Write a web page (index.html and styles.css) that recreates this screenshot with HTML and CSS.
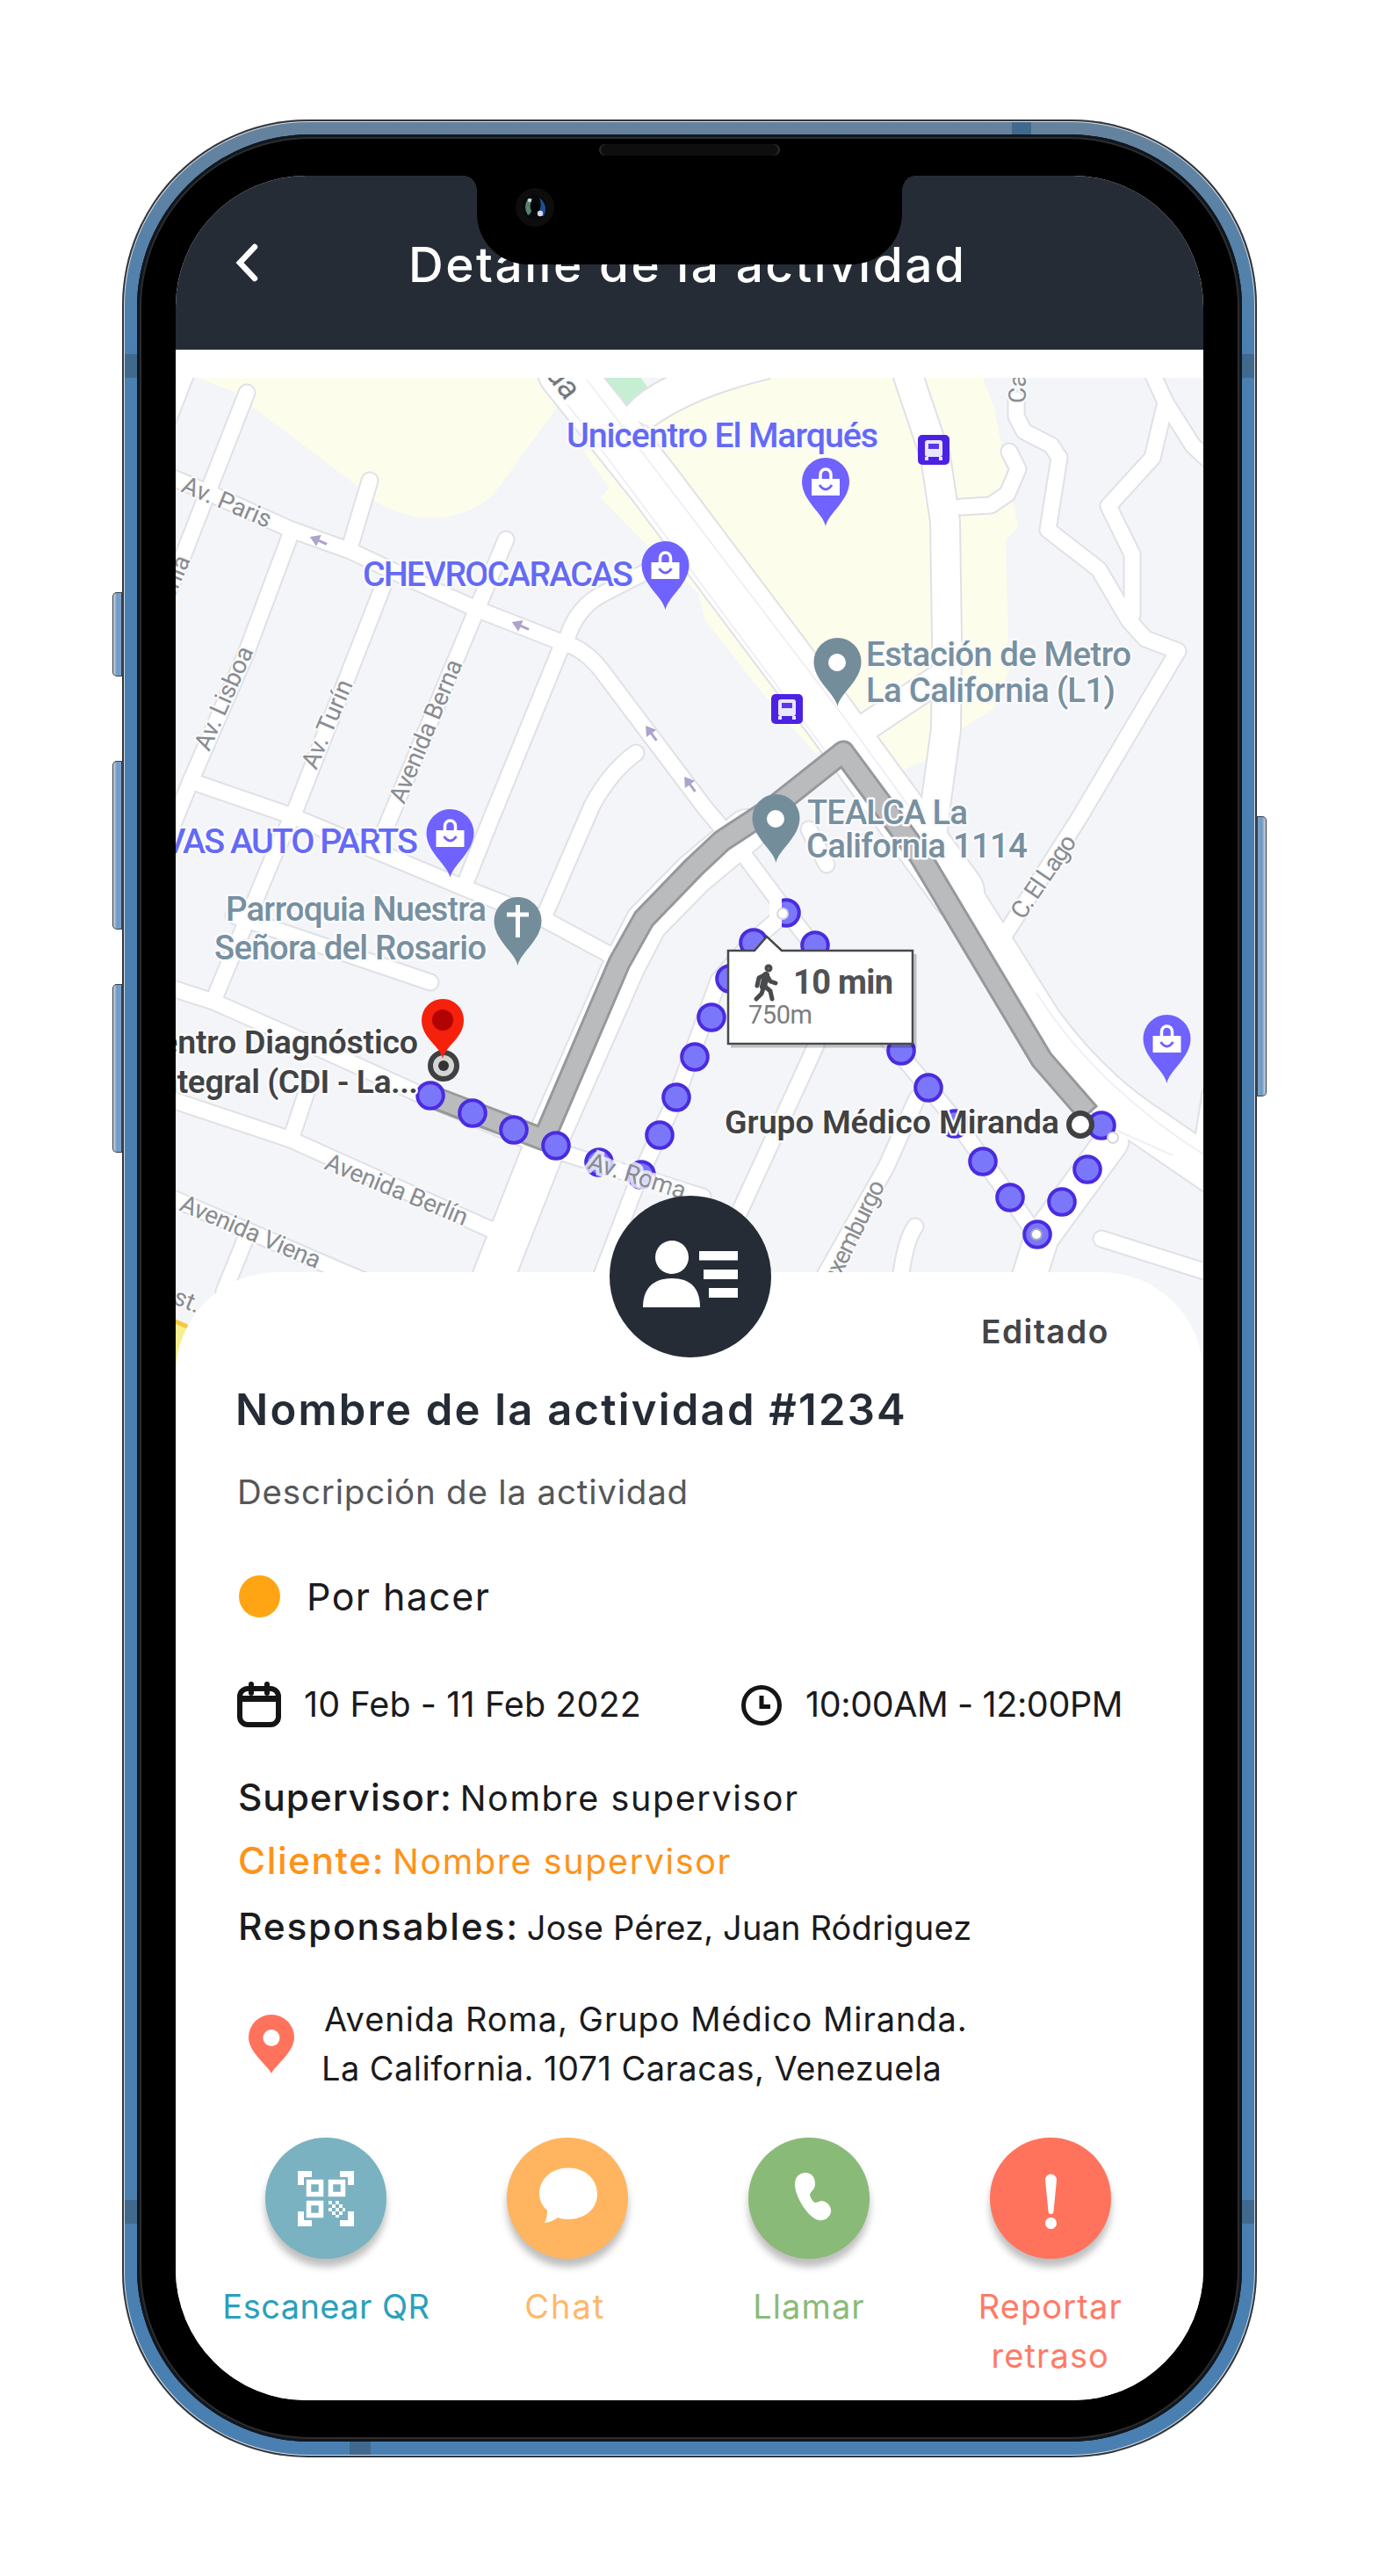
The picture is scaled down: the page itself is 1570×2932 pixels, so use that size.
FILE: index.html
```html
<!DOCTYPE html>
<html lang="es">
<head>
<meta charset="utf-8">
<title>Detalle de la actividad</title>
<link rel="stylesheet" href="styles.css">
</head>
<body>
<main class="phone">
  <span class="side-btn mute"></span>
  <span class="side-btn vol-up"></span>
  <span class="side-btn vol-down"></span>
  <span class="side-btn power"></span>
  <span class="band band-top"></span>
  <span class="band band-bottom"></span>
  <span class="band band-side band-tl"></span>
  <span class="band band-side band-tr"></span>
  <span class="band band-side band-bl"></span>
  <span class="band band-side band-br"></span>
  <div class="bezel">
    <span class="speaker"></span>
    <div class="screen">
      <div class="notch">
        <svg class="camera" viewBox="0 0 44 44">
          <circle cx="22" cy="22" r="22" fill="#0d0d0e"/>
          <circle cx="22" cy="22" r="14" fill="#08090c"/>
          <path d="M14 12Q8 22 14 31Q17 30 18 26Q15 20 19 12Z" fill="#56806f"/>
          <path d="M27 11Q38 20 32 32Q27 32 26 28Q31 20 27 11Z" fill="#1c4f94"/>
          <circle cx="22" cy="22" r="5" fill="#030405"/>
          <circle cx="16" cy="14" r="2.2" fill="#c6d8cf"/>
          <circle cx="28" cy="29" r="3.2" fill="#d9d3e6"/>
        </svg>
      </div>
      <header class="topbar">
        <svg class="back" viewBox="0 0 30 46"><path d="M25 5L8 23L25 41"/></svg>
        <h1 class="topbar-title">Detalle de la actividad</h1>
      </header>

      <svg class="map" viewBox="200 430 1170 1150">
        <defs>
          <g id="shop">
            <path d="M0 51C-3 36-27 22-27 0A27 27 0 0 1 27 0C27 22 3 36 0 51Z" fill="#6f62ff"/>
            <path d="M-16 -3H16V16H-16Z" fill="#fff"/>
            <path d="M-6 -3V-8A6 6 0 0 1 6 -8V-3" fill="none" stroke="#fff" stroke-width="3.5"/>
            <path d="M-7 4Q0 14 7 4" fill="none" stroke="#6f62ff" stroke-width="3"/>
          </g>
          <path id="poi" d="M0 51C-3 36-27 22-27 0A27 27 0 0 1 27 0C27 22 3 36 0 51Z" fill="#748d9b"/>
          <g id="bus">
            <rect x="-18" y="-17" width="36" height="34" rx="5" fill="#4b22e2"/>
            <rect x="-10" y="-11" width="20" height="19" rx="3" fill="#e9e6ff"/>
            <rect x="-6" y="-7" width="12" height="6" fill="#5a3ae6"/>
            <path d="M-8 8V12M8 8V12" stroke="#e9e6ff" stroke-width="4"/>
          </g>
          <path id="oneway" d="M-10 0L1 -7V-1.5H11V1.5H1V7Z" fill="#aea3cc"/>
          <g id="minor">
            <path d="M216 415L186 492"/>
            <path d="M281 447L232 572L186 690"/>
            <path d="M190 541L240 562L332 603L399 627L458 655L542 693L642 732Q665 738 684 762L803 920L841 965L891 1032L1009 1181L1086 1273L1180 1406"/>
            <path d="M421 547L398 624"/>
            <path d="M332 605L280 744L217 889L185 968"/>
            <path d="M437 665L335 925L312 973L245 1134"/>
            <path d="M576 614L546 686L431 962"/>
            <path d="M640 734L557 937L528 1010"/>
            <path d="M741 648L690 674Q655 690 644 732"/>
            <path d="M724 857Q695 878 674 917L620 1042"/>
            <path d="M217 889L333 929L527 1010L619 1046L695 1087"/>
            <path d="M266 1042L490 1118"/>
            <path d="M190 1123L243 1140L354 1189L488 1250L615 1304L726 1339L800 1362"/>
            <path d="M190 1250L331 1297L560 1400"/>
            <path d="M350 1240L331 1297"/>
            <path d="M190 1361L389 1447L420 1460"/>
            <path d="M282 1404L255 1470"/>
            <path d="M898 1036L858 1070L818 1116L770 1249L726 1344L680 1464"/>
            <path d="M921 944L941 984"/>
            <path d="M929 1190L837 1390"/>
            <path d="M1044 1250L1009 1328L932 1464"/>
            <path d="M1042 1396Q1030 1412 1024 1464"/>
            <path d="M1254 1410L1390 1453"/>
            <path d="M1378 1245L1366 1320"/>
            <path d="M1094 577L1128 575L1147 562L1159 534L1149 514"/>
            <path d="M1157 455V474L1166 491L1197 507L1206 521L1193 603L1251 648L1285 706L1304 727L1341 741L1228 932L1142 1067L1120 1090"/>
            <path d="M1312 425L1327 458L1312 521L1262 576L1289 631V700"/>
            <path d="M1327 458L1358 507L1385 532"/>
          </g>
          <path id="boulevard" d="M561 1455L622 1300L712 1096L736 1050L790 995L850 945"/>
          <path id="northsouth" d="M1033 425L1065 520L1076 593L1078 727L1077 830L1066 910L1062 945"/>
          <path id="highway" d="M643 423L745 551L945 817L1090 1015"/>
          <path id="highway-south" d="M1050 950L1185 1165Q1240 1240 1310 1285L1390 1340"/>
          <path id="ramp" d="M979 832L1075 768"/>
          <path id="plaza" d="M1168 1465L1186 1408L1265 1300"/>
          <circle id="dot" r="14.8" fill="#7b77fb" stroke="#4a2cdf" stroke-width="4"/>
        </defs>
        <rect x="200" y="430" width="1170" height="1150" fill="#f4f5f8"/>
        <g fill="#fdfdeb">
          <path d="M226 430H615L634 464L573 548Q545 590 488 589Q440 588 404 551L286 462L266 446Z"/>
          <path d="M741 486L780 455L872 430H1119L1132 465L1159 600L1145 614L1149 761L1132 806L1094 830L1055 865L1025 878L960 850Z"/>
          <path d="M664 513L693 555L684 567L733 617L795 675L803 706L868 789L929 858L960 840L700 500Z"/>
        </g>
        <path d="M676 420H722L739 443L712 470Z" fill="#c5eed3"/>
        <path d="M190 1500L216 1511L240 1590H190Z" fill="#f7ef8f"/>
        <path d="M190 1500L218 1512" stroke="#f5c842" stroke-width="5"/>

        <g fill="none" stroke="#e0e1e6" stroke-linecap="round" stroke-linejoin="round">
          <use href="#minor" stroke-width="21"/>
          <use href="#boulevard" stroke-width="50"/>
          <use href="#northsouth" stroke-width="36"/>
          <use href="#highway" stroke-width="64"/>
          <use href="#highway-south" stroke-width="52"/>
          <use href="#ramp" stroke-width="34"/>
          <use href="#plaza" stroke-width="42"/>
          <path d="M712 465Q730 444 765 428L875 430Q790 450 741 486Z" stroke-width="5"/>
        </g>
        <g fill="none" stroke="#fff" stroke-linecap="round" stroke-linejoin="round">
          <use href="#minor" stroke-width="17"/>
          <use href="#boulevard" stroke-width="46"/>
          <use href="#northsouth" stroke-width="32"/>
          <use href="#highway" stroke-width="60"/>
          <use href="#highway-south" stroke-width="48"/>
          <use href="#ramp" stroke-width="30"/>
          <use href="#plaza" stroke-width="38"/>
          <path d="M712 465Q730 444 765 428L875 430Q790 450 741 486L725 478Z" fill="#fff" stroke-width="1"/>
        </g>
        <g fill="none" stroke="#eef0f6" stroke-width="2">
          <path d="M646 460L940 855M668 432L960 815L1040 925"/>
          <path d="M1180 1130Q1250 1240 1380 1320M1230 1268L1335 1315"/>
        </g>
        <g>
          <use href="#oneway" transform="translate(362 615) rotate(23)"/>
          <use href="#oneway" transform="translate(592 712) rotate(23)"/>
          <use href="#oneway" transform="translate(741 834) rotate(54)"/>
          <use href="#oneway" transform="translate(785 892) rotate(54)"/>
        </g>

        <g fill="none" stroke-linejoin="round">
          <path stroke="#97989b" stroke-width="27" d="M488 1247L619 1297L705 1096L733 1046L790 987L822 957L883 917L960 856L1048 975L1186 1206L1240 1268"/>
          <path stroke="#babbbd" stroke-width="21" d="M489 1247L619 1297L705 1096L733 1046L790 987L822 957L883 917L960 856L1048 975L1186 1206L1238 1266"/>
        </g>

        <g>
          <use href="#dot" x="490" y="1247"/><use href="#dot" x="538" y="1267"/>
          <use href="#dot" x="585" y="1286"/><use href="#dot" x="633" y="1304"/>
          <use href="#dot" x="682" y="1323"/><use href="#dot" x="730" y="1337"/>
          <use href="#dot" x="751" y="1292"/><use href="#dot" x="770" y="1249"/>
          <use href="#dot" x="791" y="1203"/><use href="#dot" x="810" y="1158"/>
          <use href="#dot" x="831" y="1114"/><use href="#dot" x="858" y="1073"/>
          <use href="#dot" x="895" y="1039"/><use href="#dot" x="928" y="1076"/>
          <use href="#dot" x="1026" y="1196"/><use href="#dot" x="1057" y="1238"/>
          <use href="#dot" x="1087" y="1279"/><use href="#dot" x="1119" y="1322"/>
          <use href="#dot" x="1150" y="1363"/><use href="#dot" x="1181" y="1405"/>
          <use href="#dot" x="1209" y="1368"/><use href="#dot" x="1238" y="1331"/>
          <use href="#dot" x="1254" y="1281"/>
        </g>
        <rect x="876" y="1022" width="14" height="33" fill="#fff"/>
        <g fill="#fff" stroke="#d8d8dc" stroke-width="2">
          <circle cx="891" cy="1040" r="6"/>
          <circle cx="1180" cy="1405" r="6" stroke="#aab"/>
          <circle cx="1267" cy="1295" r="6"/>
        </g>
        <circle cx="1230" cy="1280" r="13" fill="#fff" stroke="#3f4042" stroke-width="6"/>

        <g class="street">
          <text x="205" y="559" transform="rotate(23 205 559)" textLength="108">Av. Paris</text>
          <text x="238" y="856" transform="rotate(-66.2 238 856)" textLength="126">Av. Lisboa</text>
          <text x="360" y="877" transform="rotate(-66.8 360 877)" textLength="107">Av. Turín</text>
          <text x="460" y="916" transform="rotate(-67.4 460 916)" textLength="174">Avenida Berna</text>
          <text x="217" y="637" transform="rotate(-67 217 637)" text-anchor="end">enia</text>
          <text x="368" y="1330" transform="rotate(22.2 368 1330)" textLength="173">Avenida Berlín</text>
          <text x="203" y="1377" transform="rotate(23.2 203 1377)" textLength="171">Avenida Viena</text>
          <text x="224" y="1495" transform="rotate(23 224 1495)" text-anchor="end">est.</text>
          <text class="over-dots" x="668" y="1330" transform="rotate(17.8 668 1330)" textLength="115">Av. Roma</text>
          <text x="1165" y="1048" transform="rotate(-55.7 1165 1048)" textLength="109">C. El Lago</text>
          <text x="1008" y="1349" transform="rotate(-64 1008 1349)" text-anchor="end" textLength="141">Luxemburgo</text>
          <text x="1168" y="459" transform="rotate(-90 1168 459)">Calle</text>
          <text class="avenue" x="644" y="457" transform="rotate(53 644 457)" text-anchor="end">Agua</text>
        </g>

        <g class="place shop">
          <text x="645" y="509" textLength="355">Unicentro El Marqués</text>
          <text x="413" y="667" textLength="308">CHEVROCARACAS</text>
          <text x="476" y="971" text-anchor="end" textLength="290">VAS AUTO PARTS</text>
        </g>
        <g class="place civic">
          <text x="986" y="758" textLength="302">Estación de Metro</text>
          <text x="986" y="799" textLength="284">La California (L1)</text>
          <text x="919" y="938" textLength="183">TEALCA La</text>
          <text x="918" y="976" textLength="252">California 1114</text>
          <text x="257" y="1048" textLength="297">Parroquia Nuestra</text>
          <text x="244" y="1092" textLength="310">Señora del Rosario</text>
        </g>
        <g class="place stop">
          <text x="476" y="1199" text-anchor="end" textLength="318">Centro Diagnóstico</text>
          <text x="476" y="1244" text-anchor="end" textLength="305">Integral (CDI - La...</text>
          <text x="825" y="1290" textLength="381">Grupo Médico Miranda</text>
        </g>

        <use href="#shop" x="940" y="548"/>
        <use href="#shop" x="757.5" y="643"/>
        <use href="#shop" x="512.5" y="948"/>
        <use href="#shop" x="1328.5" y="1182"/>
        <use href="#poi" x="953.5" y="753"/><circle cx="953" cy="754" r="10" fill="#fff"/>
        <use href="#poi" x="883.5" y="931"/><circle cx="883" cy="932" r="10" fill="#fff"/>
        <use href="#poi" x="589.5" y="1048"/>
        <path d="M589.500 1030V1067M577 1041H602" stroke="#fff" stroke-width="5"/>
        <use href="#bus" x="1063" y="512"/>
        <use href="#bus" x="896" y="807"/>

        <circle cx="505" cy="1213" r="15" fill="#d5d5d5" stroke="#3f4042" stroke-width="6"/>
        <circle cx="505" cy="1213" r="6" fill="#333"/>
        <path d="M504 1205C501 1190 480 1182 480 1161A24 24 0 0 1 528 1161C528 1182 507 1190 504 1205Z" fill="#f5210b"/>
        <circle cx="504" cy="1161" r="12" fill="#b20303"/>

        <path d="M829 1082H859L873 1066L890 1082H1039V1188H829Z" fill="#fff" stroke="#47494b" stroke-width="2.500"/>
        <path d="M832 1191H1042V1086" fill="none" stroke="#000" stroke-opacity=".22" stroke-width="3"/>
        <g fill="none" stroke="#484a4c" stroke-width="5" stroke-linecap="round" stroke-linejoin="round">
          <circle cx="875" cy="1102" r="2"/>
          <path d="M862 1122L864 1113L872 1109L870 1122L877 1128L879 1137M870 1122L867 1131L861 1137M873 1110L877 1117L883 1119"/>
          <path d="M872 1110L869 1123" stroke-width="8"/>
        </g>
        <text class="walk-time" x="903" y="1131" textLength="114">10 min</text>
        <text class="walk-dist" x="852" y="1165" textLength="73">750m</text>
      </svg>

      <section class="sheet">
        <div class="avatar">
          <svg viewBox="0 0 184 184">
            <g fill="#fff">
              <circle cx="71" cy="70" r="19"/>
              <path d="M38 127C38 105 50 94 71 94S103 105 103 127Z"/>
              <path d="M102 63H146V73.500H102ZM107 84H146V95H107ZM113 105H146V116H113Z"/>
            </g>
          </svg>
        </div>
        <p class="edited">Editado</p>
        <h2 class="name">Nombre de la actividad #1234</h2>
        <p class="desc">Descripción de la actividad</p>
        <p class="status"><i class="status-dot"></i>Por hacer</p>
        <div class="when">
          <svg class="cal" viewBox="0 0 52 52">
            <rect x="4" y="8" width="44" height="41" rx="9"/>
            <path d="M4 19.500H48" stroke-width="7"/>
            <path d="M17 3V13M35 3V13" stroke-linecap="round"/>
          </svg>
          <span class="when-date">10 Feb - 11 Feb 2022</span>
          <svg class="clock" viewBox="0 0 46 46">
            <circle cx="23" cy="23" r="20.500"/>
            <path d="M23 12V24.500H33"/>
          </svg>
          <span class="when-time">10:00AM - 12:00PM</span>
        </div>
        <div class="people">
          <p class="supervisor"><b>Supervisor:</b><span>Nombre supervisor</span></p>
          <p class="client"><b>Cliente:</b><span>Nombre supervisor</span></p>
          <p class="team"><b>Responsables:</b><span>Jose Pérez, Juan Ródriguez</span></p>
        </div>
        <div class="address">
          <svg class="pin" viewBox="0 0 52 67"><path fill-rule="evenodd" d="M26 67C22 58 0 43 0 26A26 26 0 0 1 52 26C52 43 30 58 26 67ZM26 17A9.500 9.500 0 1 0 26 36A9.500 9.500 0 1 0 26 17Z"/></svg>
          <div>
            <p class="street-line">Avenida Roma, Grupo Médico Miranda.</p>
            <p class="city-line">La California. 1071 Caracas, Venezuela</p>
          </div>
        </div>
        <nav class="actions">
          <a class="action qr">
            <span class="disc"><svg viewBox="0 0 138 138">
              <g fill="none" stroke="#fff" stroke-width="7">
                <path d="M40.500 54V41.500H53M85 41.500H97.500V54M97.500 84V97.500H85M53 97.500H40.500V84"/>
                <path stroke-width="5.500" d="M49.500 50.500H63.500V64.500H49.500ZM74.500 50.500H88.500V64.500H74.500ZM49.500 74.500H63.500V88.500H49.500Z"/>
              </g>
              <path fill="#fff" d="M72 72H76V76H72ZM80 72H84V76H80ZM76 76H80V80H76ZM84 76H88V80H84ZM72 80H76V84H72ZM80 80H84V84H80ZM76 84H80V88H76ZM84 84H88V88H84ZM80 88H84V91H80ZM88 80H91V84H88Z"/>
            </svg></span>
            <span class="caption">Escanear QR</span>
          </a>
          <a class="action chat">
            <span class="disc"><svg viewBox="0 0 138 138"><path fill="#fff" d="M70 34.500C89 34.500 103 47 103 64S89 93 70 93C65 93 61 92 58 91Q52 96 43 97Q46 91 46 83Q37 75 37 64C37 47 51 34.500 70 34.500Z"/></svg></span>
            <span class="caption">Chat</span>
          </a>
          <a class="action call">
            <span class="disc"><svg viewBox="0 0 138 138"><path fill="#fff" d="M53 53C53 45 58 40 65 40C72 40 76 45 76 53C76 59 71 61 70 65C71 70 74 73 76 74C79 74 81 72 84 72C91 73 95 80 94 85C92 92 86 95 80 94C69 92 53 68 53 53Z"/></svg></span>
            <span class="caption">Llamar</span>
          </a>
          <a class="action report">
            <span class="disc"><svg viewBox="0 0 138 138"><path fill="#fff" d="M63 48A6.500 6.500 0 0 1 76 48L72.500 84A3 3 0 0 1 66.500 84ZM69.500 91A6.500 6.500 0 1 1 69.490 91Z"/></svg></span>
            <span class="caption">Reportar<br>retraso</span>
          </a>
        </nav>
      </section>
    </div>
  </div>
</main>
</body>
</html>
```
FILE: styles.css
```css
* { box-sizing: border-box; margin: 0; padding: 0; }
body {
  background: #fff;
  font-family: Inter, "Open Sans", sans-serif;
  color: #1b1b1d;
  padding: 136px 0 135px;
}
svg { display: block; overflow: hidden; }

.phone {
  position: relative;
  width: 1292px;
  height: 2661px;
  margin: 0 auto;
  padding: 17px 17px 18px;
  border-radius: 212px;
  background: linear-gradient(#66829c 0, #5f83a3 60px, #4a80b1 260px, #4a80b1 100%);
  box-shadow: inset 0 0 0 2px #34353a, inset 0 0 0 3px #d6dde3;
}
.bezel {
  position: relative;
  height: 100%;
  padding: 47px 44px;
  border-radius: 197px;
  background: #000;
  box-shadow: inset 0 0 0 3px #10171f, inset 0 0 0 5px #2c2d2f;
}
.screen {
  position: relative;
  height: 2532px;
  border-radius: 149px;
  overflow: hidden;
  background: #fff;
  display: flex;
  flex-direction: column;
}

.side-btn {
  position: absolute;
  width: 12px;
  left: -11px;
  border: 1.5px solid #3c4049;
  border-right-width: 2px;
  background: linear-gradient(90deg, #c3cddb 0, #a9bbd2 2px, #6e99c4 4px, #7aa3cd 100%);
  border-radius: 5px 0 0 5px;
}
.mute { top: 538px; height: 96px; }
.vol-up { top: 730px; height: 192px; }
.vol-down { top: 984px; height: 192px; }
.power { left: auto; right: -11px; top: 793px; height: 319px; transform: scaleX(-1); }
.band { position: absolute; background: #41698e; }
.band-top { left: 1013px; top: 3px; width: 22px; height: 14px; }
.band-bottom { left: 259px; bottom: 3px; width: 24px; height: 15px; }
.band-side { width: 14px; height: 27px; }
.band-tl { left: 3px; top: 267px; }
.band-tr { right: 3px; top: 267px; }
.band-bl { left: 3px; top: 2368px; }
.band-br { right: 3px; top: 2368px; }
.speaker {
  position: absolute;
  left: 526px;
  top: 11px;
  width: 206px;
  height: 13px;
  border-radius: 7px;
  background: #0e0e0f;
  box-shadow: inset 2px 0 1px #2c2c2e, inset -2px 0 1px #2c2c2e;
}
.notch {
  position: absolute;
  z-index: 3;
  left: 343px;
  top: 0;
  width: 484px;
  height: 101px;
  background: #000;
  border-radius: 0 0 58px 58px;
}
.notch::before, .notch::after {
  content: "";
  position: absolute;
  top: 0;
  width: 15px;
  height: 17px;
}
.notch::before { left: -15px; background: radial-gradient(ellipse 15px 17px at 0 100%, transparent 98%, #000); }
.notch::after { right: -15px; background: radial-gradient(ellipse 15px 17px at 100% 100%, transparent 98%, #000); }
.camera { width: 44px; height: 44px; margin: 14px 0 0 44px; }

.topbar {
  flex: none;
  height: 198px;
  background: #262c36;
  display: flex;
  padding: 65px 0 0 65px;
}
.back { width: 30px; height: 46px; margin-top: 11px; }
.back path { fill: none; stroke: #fff; stroke-width: 6.5; stroke-linecap: round; }
.topbar-title {
  margin-left: 170px;
  font-size: 55px;
  letter-spacing: 2.5px;
  line-height: 72px;
  font-weight: 500;
  color: #fff;
  white-space: nowrap;
}

.map { flex: none; width: 1170px; height: 1150px; margin-top: 32px; font-family: Roboto, sans-serif; }
.street { font-size: 28px; fill: #898c90; stroke: #f9fafb; stroke-width: 4px; paint-order: stroke; }
.over-dots { stroke-width: 8px; stroke-opacity: .8; }
.avenue { font-size: 36px; fill: #75787c; }
.place { font-size: 39.5px; font-weight: 500; stroke: #fafafc; stroke-width: 5px; paint-order: stroke; stroke-linejoin: round; }
.place.shop { fill: #646af6; }
.place.civic { fill: #7790a0; font-size: 38.5px; }
.place.stop { fill: #414244; font-weight: 600; font-size: 37.5px; }
.walk-time { font-size: 38px; font-weight: 700; fill: #505255; }
.walk-dist { font-size: 29px; fill: #7b7d80; }

.sheet {
  position: relative;
  flex: none;
  height: 1284px;
  margin-top: -132px;
  border-radius: 116px 116px 0 0;
  background: #fff;
  padding-top: 46px;
  white-space: nowrap;
}
.avatar {
  position: absolute;
  left: 494px;
  top: -87px;
  width: 184px;
  height: 184px;
  border-radius: 50%;
  background: #262c36;
}
.edited { padding-left: 917px; font-size: 37.2px; letter-spacing: 1.4px; line-height: 44px; font-weight: 600; color: #444547; }
.name { margin-top: 39px; padding-left: 68px; font-size: 49px; letter-spacing: 2.2px; line-height: 56px; font-weight: 600; color: #262c36; }
.desc { margin-top: 42px; padding-left: 70px; font-size: 38.5px; letter-spacing: .8px; line-height: 46px; color: #565759; }
.status { margin-top: 70px; padding-left: 72px; font-size: 43px; letter-spacing: 1.4px; line-height: 52px; display: flex; align-items: center; }
.status-dot { width: 47px; height: 48px; border-radius: 50%; background: #ffa514; margin-right: 30px; }
.when { margin-top: 71px; padding-left: 69px; font-size: 39.5px; line-height: 50px; display: flex; align-items: center; }
.cal { width: 52px; height: 52px; margin-right: 25px; fill: none; stroke: #151517; stroke-width: 6; }
.clock { width: 46px; height: 46px; margin: 2px 27px 0 0; fill: none; stroke: #151517; stroke-width: 5; }
.when-date { width: 498px; letter-spacing: .1px; }
.when-time { letter-spacing: -.4px; }
.people { margin-top: 55px; padding-left: 71px; line-height: 50px; }
.people p { height: 50px; display: flex; align-items: baseline; }
.people b { font-weight: 500; font-size: 42.5px; margin-right: 9px; }
.people span { font-size: 39.5px; letter-spacing: 1.6px; }
.supervisor b { letter-spacing: .85px; }
.people .client { color: #ff9219; margin: 22px 0 25px; }
.client b { letter-spacing: 1.5px; }
.team b { letter-spacing: 1.75px; }
.people .team span { font-size: 38px; letter-spacing: .15px; }
.address { margin-top: 52px; padding-left: 83px; font-size: 38px; line-height: 56px; display: flex; }
.pin { width: 52px; height: 67px; margin: 23px 34px 0 0; fill: #ff735d; }
.street-line { letter-spacing: .95px; }
.city-line { margin-left: -3px; letter-spacing: .45px; }
.actions { margin-top: 51px; padding-left: 34px; display: flex; }
.action { width: 274.8px; display: flex; flex-direction: column; align-items: center; }
.disc { width: 138px; height: 138px; border-radius: 50%; box-shadow: 0 9px 9px rgba(0, 0, 0, .26); }
.caption { margin-top: 26px; font-size: 38px; letter-spacing: 1.1px; line-height: 56px; text-align: center; }
.qr .disc { background: #7ab2c1; }
.qr .caption { color: #2aa0bc; letter-spacing: .45px; }
.chat .disc { background: #ffb560; }
.chat .caption { color: #ffb86a; letter-spacing: 2px; margin-right: 6px; }
.call .disc { background: #8aba77; }
.call .caption { color: #8bba7a; }
.report .disc { background: #ff735d; }
.report .caption { color: #ff7a66; }
```
